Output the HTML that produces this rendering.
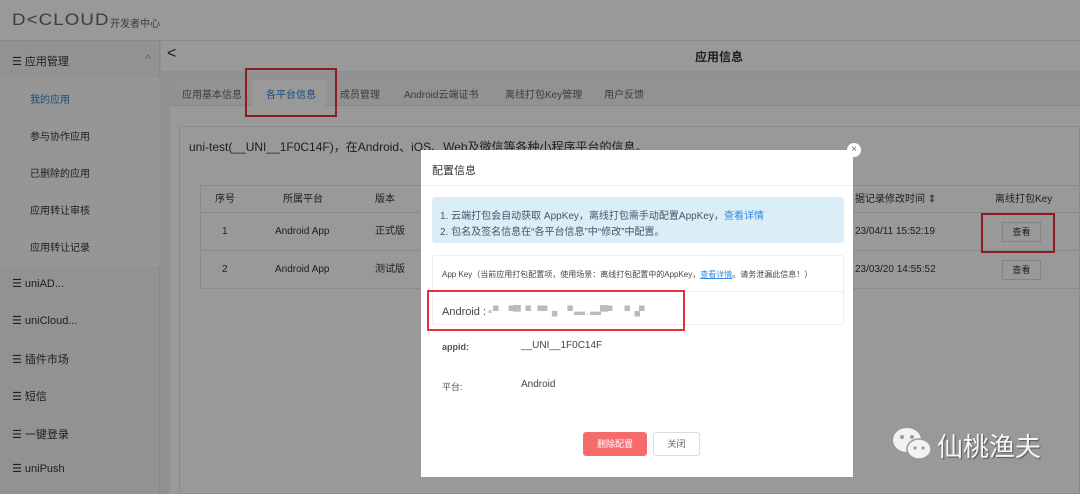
<!DOCTYPE html><html><head><meta charset="utf-8"><style>
*{margin:0;padding:0;box-sizing:border-box}
body{width:1080px;height:494px;overflow:hidden;position:relative;font-family:"Liberation Sans","Noto Sans CJK SC",sans-serif;background:#eef0f3;color:#333;font-size:12px}
.a{position:absolute}
.hdr{left:0;top:0;width:1080px;height:41px;background:#fff;border-bottom:1px solid #e5e5e5}
.side{left:0;top:41px;width:160px;height:453px;background:#f4f4f4;border-right:1px solid #e3e3e3}
.si{position:absolute;left:12px;font-size:11px;color:#333}
.sub{position:absolute;left:30px;font-size:10px;color:#333}
.ov{left:0;top:0;width:1080px;height:494px;background:rgba(0,0,0,.4)}
.modal{left:421px;top:150px;width:432px;height:327px;background:#fff}
.red{border:2px solid #e8313b}
.cell{position:absolute;font-size:10px;line-height:12px}
</style></head><body>
<div class="a hdr"></div>
<div class="a" style="left:12px;top:10px;font-size:17px;letter-spacing:1px;color:#666;font-weight:normal;transform:scaleX(1.1);transform-origin:left">D&lt;CLOUD</div>
<div class="a" style="left:110px;top:15px;font-size:10px;color:#666">开发者中心</div>
<div class="a side"></div>
<div class="a" style="left:0;top:78px;width:160px;height:188px;background:#fafafa"></div>
<div class="si" style="top:53px">☰ 应用管理</div><div class="a" style="left:145px;top:52px;color:#999">^</div>
<div class="sub" style="top:91px;color:#2f7dd2">我的应用</div>
<div class="sub" style="top:128px">参与协作应用</div>
<div class="sub" style="top:165px">已删除的应用</div>
<div class="sub" style="top:202px">应用转让审核</div>
<div class="sub" style="top:239px">应用转让记录</div>
<div class="si" style="top:277px">☰ uniAD...</div>
<div class="si" style="top:314px">☰ uniCloud...</div>
<div class="si" style="top:351px">☰ 插件市场</div>
<div class="si" style="top:388px">☰ 短信</div>
<div class="si" style="top:426px">☰ 一键登录</div>
<div class="si" style="top:462px">☰ uniPush</div>
<div class="a" style="left:161px;top:41px;width:919px;height:30px;background:#fff"></div>
<div class="a" style="left:167px;top:45px;font-size:16px;color:#333">&lt;</div>
<div class="a" style="left:695px;top:48px;font-size:12px;font-weight:bold">应用信息</div>
<div class="a" style="left:170px;top:78px;width:910px;height:416px;background:#fff"></div>
<div class="a" style="left:170px;top:78px;width:910px;height:28px;background:#f3f3f3;border-bottom:1px solid #e5e5e5"></div>
<div class="a" style="left:252px;top:80px;width:74px;height:27px;background:#fff"></div>
<div class="a" style="left:182px;top:86px;font-size:10px;color:#666">应用基本信息</div>
<div class="a" style="left:266px;top:86px;font-size:10px;color:#2f7dd2">各平台信息</div>
<div class="a" style="left:340px;top:86px;font-size:10px;color:#666">成员管理</div>
<div class="a" style="left:404px;top:86px;font-size:10px;color:#666">Android云端证书</div>
<div class="a" style="left:505px;top:86px;font-size:10px;color:#666">离线打包Key管理</div>
<div class="a" style="left:604px;top:86px;font-size:10px;color:#666">用户反馈</div>
<div class="a red" style="left:245px;top:68px;width:92px;height:49px"></div>
<div class="a" style="left:179px;top:126px;width:901px;height:368px;border:1px solid #e6e6e6"></div>
<div class="a" style="left:189px;top:138px;font-size:12px">uni-test(__UNI__1F0C14F)，在Android、iOS、Web及微信等各种小程序平台的信息。</div>
<div class="a" style="left:200px;top:185px;width:880px;height:104px;border:1px solid #e6e6e6"></div>
<div class="a" style="left:200px;top:212px;width:880px;height:1px;background:#e6e6e6"></div>
<div class="a" style="left:200px;top:250px;width:880px;height:1px;background:#e6e6e6"></div>
<div class="cell" style="left:215px;top:194px">序号</div><div class="cell" style="left:283px;top:194px">所属平台</div><div class="cell" style="left:375px;top:194px">版本</div>
<div class="cell" style="left:855px;top:194px">据记录修改时间 ⇕</div><div class="cell" style="left:995px;top:194px">离线打包Key</div>
<div class="cell" style="left:222px;top:226px">1</div><div class="cell" style="left:275px;top:226px">Android App</div><div class="cell" style="left:375px;top:226px">正式版</div>
<div class="cell" style="left:222px;top:264px">2</div><div class="cell" style="left:275px;top:264px">Android App</div><div class="cell" style="left:375px;top:264px">测试版</div>
<div class="cell" style="left:855px;top:226px">23/04/11 15:52:19</div><div class="cell" style="left:855px;top:264px">23/03/20 14:55:52</div>
<div class="a" style="left:1002px;top:222px;width:39px;height:20px;border:1px solid #ddd;font-size:9px;text-align:center;line-height:18px">查看</div>
<div class="a" style="left:1002px;top:260px;width:39px;height:20px;border:1px solid #ddd;font-size:9px;text-align:center;line-height:18px">查看</div>
<div class="a red" style="left:981px;top:213px;width:74px;height:40px"></div>
<div class="a ov"></div>
<div class="a modal"></div>
<div class="a" style="left:847px;top:143px;width:14px;height:14px;border-radius:50%;background:#fff;font-size:10px;text-align:center;line-height:13px;color:#666">×</div>
<div class="a" style="left:432px;top:162px;font-size:11px">配置信息</div>
<div class="a" style="left:421px;top:185px;width:432px;height:1px;background:#eee"></div>
<div class="a" style="left:432px;top:197px;width:412px;height:46px;background:#dbeef8;border-radius:3px"></div>
<div class="a" style="left:440px;top:207px;font-size:10px;color:#456">1. 云端打包会自动获取 AppKey，离线打包需手动配置AppKey，<span style="color:#2f8ce8">查看详情</span></div>
<div class="a" style="left:440px;top:223px;font-size:10px;color:#456">2. 包名及签名信息在“各平台信息”中“修改”中配置。</div>
<div class="a" style="left:432px;top:255px;width:412px;height:70px;border:1px solid #eee;border-radius:3px"></div>
<div class="a" style="left:432px;top:291px;width:412px;height:1px;background:#eee"></div>
<div class="a" style="left:442px;top:269px;font-size:8px;color:#444">App Key（当前应用打包配置项，使用场景：离线打包配置中的AppKey，<span style="color:#2f8ce8;text-decoration:underline">查看详情</span>。请务泄漏此信息！）</div>
<div class="a" style="left:442px;top:303px;font-size:11px;color:#444">Android :<span style="color:#bbb;letter-spacing:-1px"> ▪ ▘▝▀▝ ▝▘▖▝ ▬ . ▬▀▘ ▝▗▘</span></div>
<div class="a red" style="left:427px;top:290px;width:258px;height:41px"></div>
<div class="a" style="left:442px;top:342px;font-size:9px;font-weight:bold;color:#555">appid:</div>
<div class="a" style="left:521px;top:340px;font-size:10px;color:#444">__UNI__1F0C14F</div>
<div class="a" style="left:442px;top:380px;font-size:9px;color:#555">平台:</div>
<div class="a" style="left:521px;top:379px;font-size:10px;color:#444">Android</div>
<div class="a" style="left:583px;top:432px;width:64px;height:24px;background:#f56c6c;border-radius:3px;color:#fff;font-size:9px;text-align:center;line-height:24px">删除配置</div>
<div class="a" style="left:653px;top:432px;width:47px;height:24px;border:1px solid #ddd;border-radius:3px;color:#666;font-size:9px;text-align:center;line-height:22px">关闭</div>
<svg class="a" style="left:890px;top:425px" width="45" height="38"><ellipse cx="17" cy="15" rx="14" ry="12" fill="#f2f2f2"/><ellipse cx="29" cy="24" rx="12" ry="10" fill="#f2f2f2" stroke="#999" stroke-width="1.5"/><circle cx="12" cy="12" r="2" fill="#999"/><circle cx="22" cy="12" r="2" fill="#999"/><circle cx="25" cy="23" r="1.6" fill="#999"/><circle cx="33" cy="23" r="1.6" fill="#999"/></svg>
<div class="a" style="left:937px;top:427px;font-size:26px;color:#f5f5f5;text-shadow:1px 1px 1px #555">仙桃渔夫</div>
</body></html>
